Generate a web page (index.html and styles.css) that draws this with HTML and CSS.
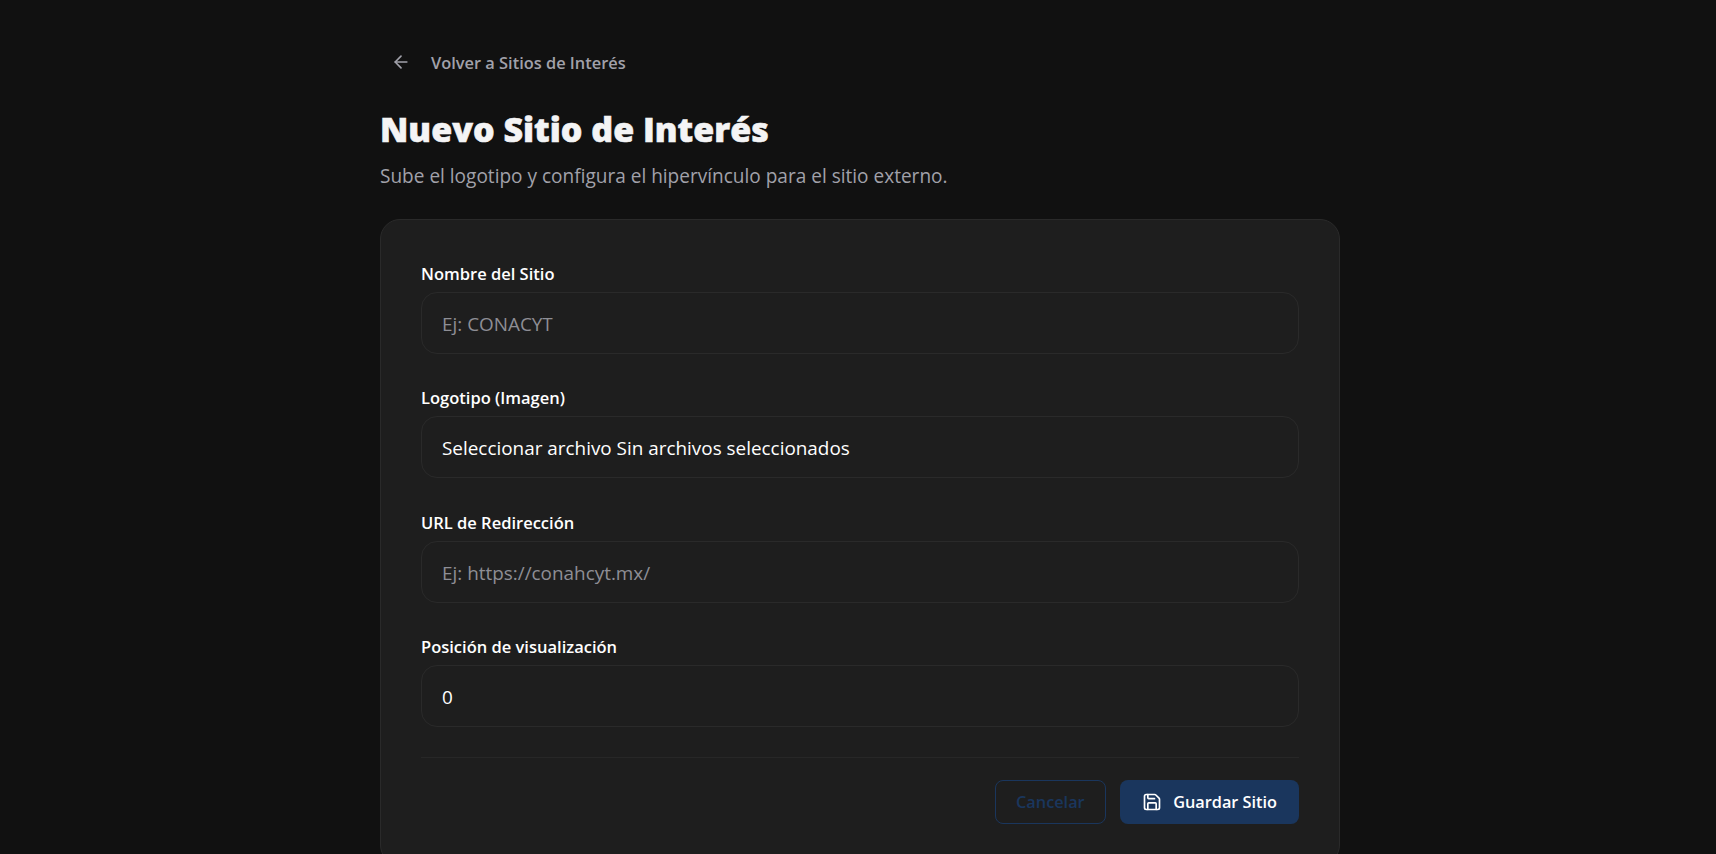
FILE: index.html
```html
<!DOCTYPE html>
<html lang="es">
<head>
    <meta charset="UTF-8">
    <meta name="viewport" content="width=device-width, initial-scale=1.0">
    <title>Nuevo Sitio de Interés</title>
    <link rel="stylesheet" href="styles.css">
</head>
<body>
    <div class="page">
        <a class="back-link" href="#sitios">
            <svg class="back-icon" viewBox="0 0 24 24" fill="none" stroke="currentColor" stroke-width="2" stroke-linecap="round" stroke-linejoin="round">
                <path d="m12 19-7-7 7-7"/>
                <path d="M19 12H5"/>
            </svg>
            <span>Volver a Sitios de Interés</span>
        </a>

        <h1>Nuevo Sitio de Interés</h1>
        <p class="subtitle">Sube el logotipo y configura el hipervínculo para el sitio externo.</p>

        <form class="card">
            <div class="field">
                <label for="nombre">Nombre del Sitio</label>
                <input id="nombre" class="control" type="text" placeholder="Ej: CONACYT">
            </div>

            <div class="field">
                <label>Logotipo (Imagen)</label>
                <div class="control file-control">Seleccionar archivo Sin archivos seleccionados</div>
            </div>

            <div class="field">
                <label for="url">URL de Redirección</label>
                <input id="url" class="control" type="text" placeholder="Ej: https://conahcyt.mx/">
            </div>

            <div class="field">
                <label for="posicion">Posición de visualización</label>
                <input id="posicion" class="control" type="text" value="0">
            </div>

            <div class="actions">
                <a class="btn btn-outline" href="#sitios">Cancelar</a>
                <button class="btn btn-primary" type="button">
                    <svg class="save-icon" viewBox="0 0 24 24" fill="none" stroke="currentColor" stroke-width="2" stroke-linecap="round" stroke-linejoin="round">
                        <path d="M15.2 3a2 2 0 0 1 1.4.6l3.8 3.8a2 2 0 0 1 .6 1.4V19a2 2 0 0 1-2 2H5a2 2 0 0 1-2-2V5a2 2 0 0 1 2-2z"/>
                        <path d="M17 21v-7a1 1 0 0 0-1-1H8a1 1 0 0 0-1 1v7"/>
                        <path d="M7 3v4a1 1 0 0 0 1 1h7"/>
                    </svg>
                    Guardar Sitio
                </button>
            </div>
        </form>
    </div>
</body>
</html>
```

FILE: styles.css
```css
* {
    margin: 0;
    padding: 0;
    box-sizing: border-box;
    font-family: "Open Sans", "Noto Sans", sans-serif;
}

body {
    height: 100vh;
    background: #111111;
    color: #ffffff;
    overflow: hidden;
}

.page {
    width: 960px;
    margin-left: 380px;
    padding-top: 44px;
}

/* Header */
.back-link {
    display: flex;
    align-items: center;
    gap: 20px;
    height: 36px;
    padding-left: 11px;
    color: #a1a1aa;
    font-size: 16.4px;
    font-weight: 600;
    text-decoration: none;
}

.back-icon {
    width: 20px;
    height: 20px;
}

h1 {
    margin-top: 27px;
    font-size: 34px;
    line-height: 44px;
    font-weight: 800;
    color: #f4f4f5;
    -webkit-text-stroke: 0.6px #f4f4f5;
}

.subtitle {
    margin-top: 12px;
    font-size: 19.05px;
    line-height: 26px;
    color: #a1a1aa;
}

/* Card */
.card {
    margin-top: 30px;
    padding: 43px 40px 40px;
    background: #1e1e1e;
    border: 1px solid #2a2a2a;
    border-radius: 20px;
}

.field {
    margin-bottom: 33.3px;
}

label {
    display: block;
    margin-bottom: 7px;
    font-size: 16.5px;
    line-height: 22px;
    font-weight: 600;
    color: #ffffff;
}

.control {
    display: block;
    width: 100%;
    height: 62px;
    padding: 2px 20px 0;
    background: transparent;
    border: 1px solid #2a2a2a;
    border-radius: 16px;
    color: #ffffff;
    font-size: 18.9px;
    outline: none;
}

.control::placeholder {
    color: #8e8e95;
}

.file-control {
    display: flex;
    align-items: center;
}

/* Actions */
.actions {
    display: flex;
    justify-content: flex-end;
    gap: 14px;
    margin-top: -3.3px;
    padding-top: 22px;
    border-top: 1px solid #272727;
}

.btn {
    display: flex;
    align-items: center;
    height: 44px;
    border-radius: 8px;
    font-size: 16.3px;
    font-weight: 600;
    text-decoration: none;
}

.btn-outline {
    padding: 0 20.5px;
    border: 1px solid #1a365d;
    color: #1a365d;
}

.btn-primary {
    gap: 11px;
    padding: 0 22px;
    border: none;
    background: #1a365d;
    color: #ffffff;
}

.save-icon {
    width: 20px;
    height: 20px;
}
```
